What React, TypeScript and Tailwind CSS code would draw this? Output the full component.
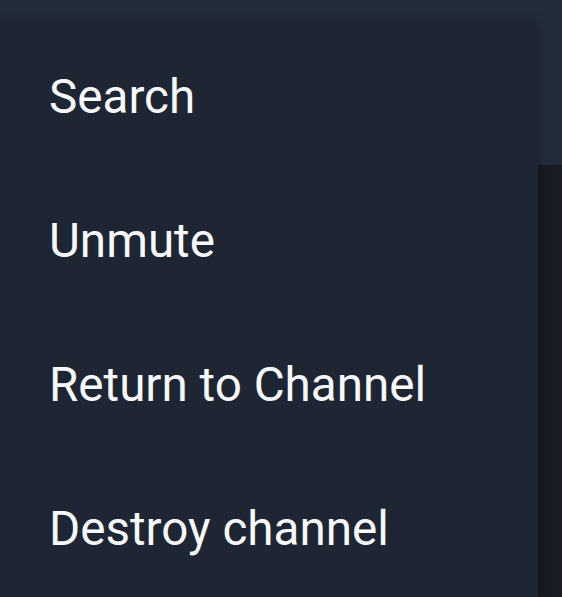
const items = ["Search", "Unmute", "Return to Channel", "Destroy channel"];

export default function App() {
  return (
    <div className="relative h-[597px] w-[562px] overflow-hidden bg-[#171c25] font-['Roboto',sans-serif]">
      <div className="h-[165px] bg-[#232c3b]" />
      <div className="absolute left-0 top-[21px] bottom-0 w-[538px] rounded-tr-[6px] bg-[#1e2633] pt-[5px] shadow-[0_2px_12px_rgba(0,0,0,0.35)]">
        {items.map((label) => (
          <div key={label} className="flex h-[144px] items-center pl-[49px] text-[47.6px] leading-none text-[#f7f8fa]">
            {label}
          </div>
        ))}
      </div>
    </div>
  );
}
